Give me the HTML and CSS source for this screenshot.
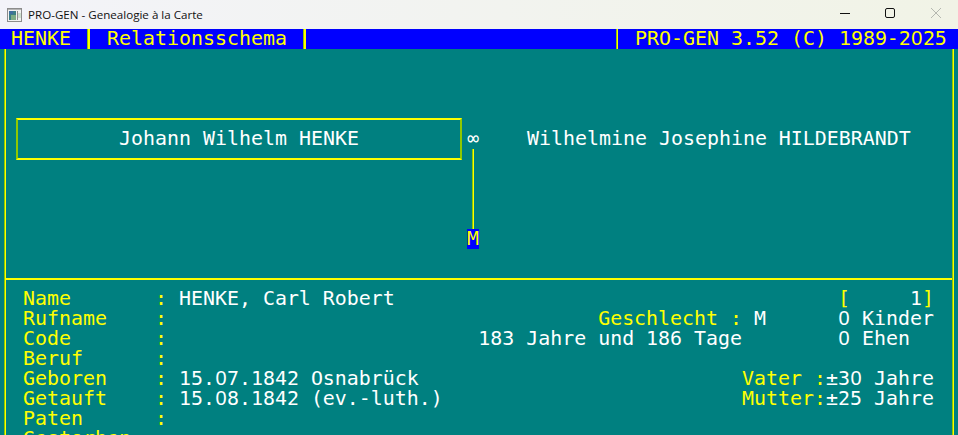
FILE: index.html
```html
<!DOCTYPE html>
<html lang="de">
<head>
<meta charset="utf-8">
<title>PRO-GEN</title>
<link rel="stylesheet" href="styles.css">
</head>
<body>
<div class="window">
  <header class="titlebar">
    <svg class="appicon" width="15" height="14" viewBox="0 0 15 14"><rect x="0.5" y="0.5" width="14" height="13" fill="#f2f2f2" stroke="#8c8c8c"/><rect x="1" y="1" width="13" height="1" fill="#b4b4b4"/><rect x="2" y="3" width="7" height="9" fill="#3d7f86"/><rect x="2" y="3" width="4" height="3" fill="#3f6fa0"/><rect x="4" y="7" width="5" height="5" fill="#7fae86"/><rect x="10" y="3" width="1" height="9" fill="#8c8c8c"/><rect x="11" y="5" width="3" height="5" fill="#cfe0cf"/></svg>
    <span class="apptitle">PRO-GEN - Genealogie à la Carte</span>
    <div class="winctl">
      <svg class="winbtn" width="46" height="29" viewBox="0 0 46 29"><path d="M19 13.5h10" stroke="#111" fill="none"/></svg>
      <svg class="winbtn" width="46" height="29" viewBox="0 0 46 29"><rect x="18.5" y="8.5" width="9" height="9" rx="1.5" stroke="#111" fill="none"/></svg>
      <svg class="winbtn" width="46" height="29" viewBox="0 0 46 29"><path d="M18 8l10 10M28 8L18 18" stroke="#b5b8b0" fill="none"/></svg>
    </div>
  </header>
  <nav class="menubar">
    <span class="cell tab-first">HENKE</span>
    <span class="cell tab-mid">Relationsschema</span>
    <span class="cell tab-last">PRO-GEN 3.52 (C) 1989-2<span class="z">0</span>25</span>
  </nav>
  <main class="screen">
    <section class="diagram">
      <div class="person">Johann Wilhelm HENKE</div>
      <div class="marriage">∞</div>
      <div class="spouse">Wilhelmine Josephine HILDEBRANDT</div>
      <div class="stem"></div>
      <div class="sex">M</div>
    </section>
    <section class="details">
      <div class="row"><span class="y">Name       :</span><span> HENKE, Carl Robert</span><span class="y push">[     </span><span>1</span><span class="y">]</span></div>
      <div class="row"><span class="y">Rufname    :</span><span class="y push">Geschlecht :</span><span> M      <span class="z">0</span> Kinder</span></div>
      <div class="row"><span class="y">Code       :</span><span class="push">183 Jahre und 186 Tage        <span class="z">0</span> Ehen  </span></div>
      <div class="row"><span class="y">Beruf      :</span></div>
      <div class="row"><span class="y">Geboren    :</span><span> 15.<span class="z">0</span>7.1842 Osnabrück</span><span class="y push">Vater :</span><span>±3<span class="z">0</span> Jahre</span></div>
      <div class="row"><span class="y">Getauft    :</span><span> 15.<span class="z">0</span>8.1842 (ev.-luth.)</span><span class="y push">Mutter:</span><span>±25 Jahre</span></div>
      <div class="row"><span class="y">Paten      :</span></div>
      <div class="row"><span class="y">Gestorben  :</span></div>
    </section>
  </main>
</div>
</body>
</html>
```
FILE: styles.css
```css
* { box-sizing: border-box; }
html, body { margin: 0; padding: 0; height: 100%; overflow: hidden; background: #008080; }
.window { width: 958px; height: 435px; display: flex; flex-direction: column; overflow: hidden; font-family: "DejaVu Sans Mono", monospace; font-size: 19.93px; }
.titlebar { height: 29px; flex: none; display: flex; align-items: center; padding-left: 7px; background: linear-gradient(90deg, #f3f3f9, #f1f3e6); font: 11.6px "Open Sans", "Liberation Sans", sans-serif; color: #111; }
.appicon { flex: none; margin-right: 6px; }
.winctl { margin-left: auto; display: flex; margin-right: -1px; }
.winbtn { display: block; }
.menubar { height: 20px; flex: none; background: #0000ff; color: #ff0; display: flex; line-height: 20px; white-space: pre; }
.cell { display: block; height: 20px; }
.tab-first { width: 90px; padding-left: 11px; border-right: 2px solid #ff0; box-shadow: inset -1px 0 #8fc800; }
.tab-mid { width: 216px; padding-left: 17px; border-right: 2px solid #ff0; box-shadow: inset -1px 0 #8fc800; }
.tab-last { margin-left: auto; width: 342px; padding-left: 18px; border-left: 1px solid #8fc800; box-shadow: inset 1px 0 #ff0; }
.screen { flex: 1; min-height: 0; display: flex; flex-direction: column; margin: 0 4px; border-left: 1px solid #8fc800; border-right: 1px solid #ff0; box-shadow: inset 1px 0 #ff0, inset -1px 0 #8fc800; padding: 0 1px; color: #fff; line-height: 20px; }
.diagram { position: relative; height: 231px; flex: none; border-bottom: 2px solid #ff0; white-space: pre; }
.person { position: absolute; left: 10px; top: 69px; width: 446px; height: 42px; border: 2px solid #ff0; border-left-color: #8fc800; border-right-color: #8fc800; text-align: center; line-height: 38px; }
.marriage { position: absolute; left: 461px; top: 80px; }
.spouse { position: absolute; left: 521px; top: 80px; }
.stem { position: absolute; left: 466px; top: 100px; width: 2px; height: 80px; background: linear-gradient(90deg, #8fc800 50%, #ff0 50%); }
.sex { position: absolute; left: 461px; top: 180px; width: 12px; height: 20px; background: #00f; color: #ff0; text-align: center; }
.details { padding: 9px 18px 0 17px; }
.row { display: flex; height: 20px; white-space: pre; }
.y { color: #ff0; }
.push { margin-left: auto; }
.z { display: inline-block; width: 12px; line-height: 1; text-align: center; font-family: "Liberation Sans", sans-serif; }
```
